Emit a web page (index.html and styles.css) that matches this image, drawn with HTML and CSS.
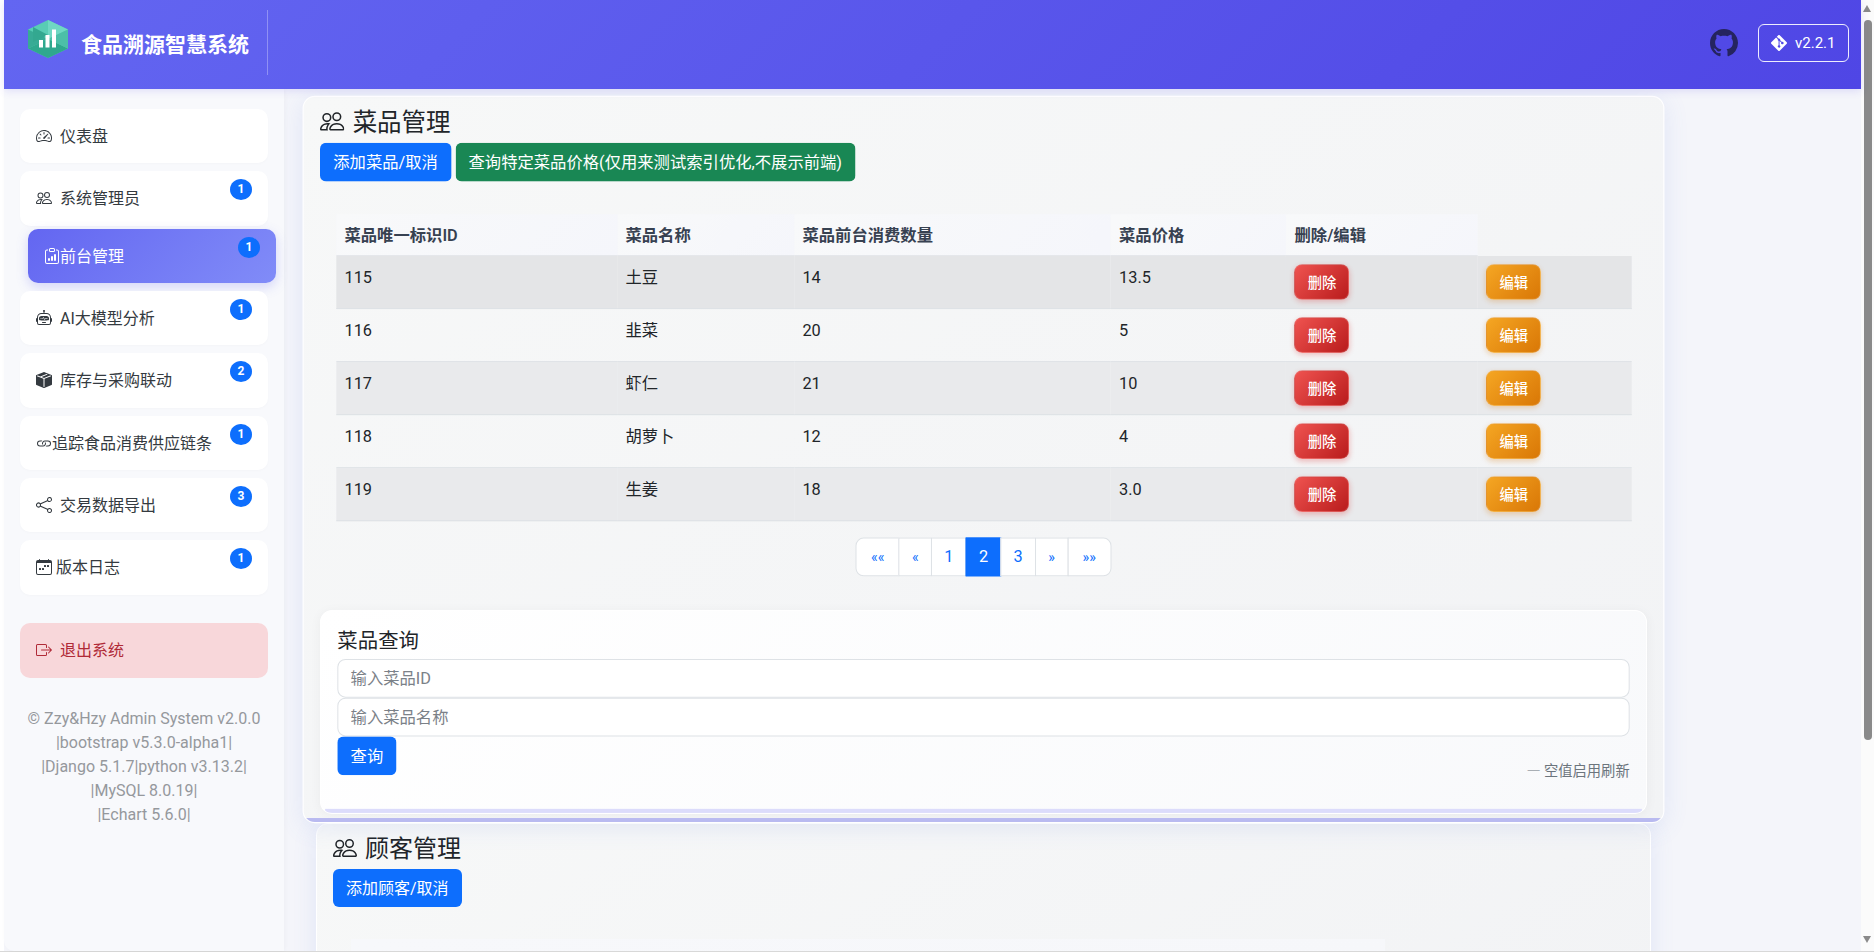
FILE: index.html
```html
<!DOCTYPE html>
<html lang="zh-CN">
<head>
<meta charset="utf-8">
<title>食品溯源智慧系统</title>
<link rel="stylesheet" href="styles.css">
</head>
<body>
<svg class="sprite" xmlns="http://www.w3.org/2000/svg">
  <symbol id="i-speed" viewBox="0 0 16 16"><path d="M8 4a.5.5 0 0 1 .5.5V6a.5.5 0 0 1-1 0V4.5A.5.5 0 0 1 8 4zM3.732 5.732a.5.5 0 0 1 .707 0l.915.914a.5.5 0 1 1-.708.708l-.914-.915a.5.5 0 0 1 0-.707zM2 10a.5.5 0 0 1 .5-.5h1.586a.5.5 0 0 1 0 1H2.5A.5.5 0 0 1 2 10zm9.5 0a.5.5 0 0 1 .5-.5h1.5a.5.5 0 0 1 0 1H12a.5.5 0 0 1-.5-.5zm.754-4.246a.389.389 0 0 0-.527-.02L7.547 9.31a.91.91 0 1 0 1.302 1.258l3.434-4.297a.389.389 0 0 0-.029-.518z"/><path fill-rule="evenodd" d="M0 10a8 8 0 1 1 15.547 2.661c-.442 1.253-1.845 1.602-2.932 1.25C11.309 13.488 9.475 13 8 13c-1.474 0-3.31.488-4.615.911-1.087.352-2.49.003-2.932-1.25A7.988 7.988 0 0 1 0 10zm8-7a7 7 0 0 0-6.603 9.329c.203.575.923.876 1.68.63C4.397 12.533 6.358 12 8 12s3.604.532 4.923.96c.757.245 1.477-.056 1.68-.631A7 7 0 0 0 8 3z"/></symbol>
  <symbol id="i-people" viewBox="0 0 16 16"><path d="M15 14s1 0 1-1-1-4-5-4-5 3-5 4 1 1 1 1h8Zm-7.978-1A.261.261 0 0 1 7 12.996c.001-.264.167-1.03.76-1.72C8.312 10.629 9.282 10 11 10c1.717 0 2.687.63 3.24 1.276.593.69.758 1.457.76 1.72l-.008.002a.274.274 0 0 1-.014.002H7.022ZM11 7a2 2 0 1 0 0-4 2 2 0 0 0 0 4Zm3-2a3 3 0 1 1-6 0 3 3 0 0 1 6 0ZM6.936 9.28a5.88 5.88 0 0 0-1.23-.247A7.35 7.35 0 0 0 5 9c-4 0-5 3-5 4 0 .667.333 1 1 1h4.216A2.238 2.238 0 0 1 5 13c0-1.01.377-2.042 1.09-2.904.243-.294.526-.569.846-.816ZM4.92 10A5.493 5.493 0 0 0 4 13H1c0-.26.164-1.03.76-1.724.545-.636 1.492-1.256 3.16-1.275ZM1.5 5.5a3 3 0 1 1 6 0 3 3 0 0 1-6 0Zm3-2a2 2 0 1 0 0 4 2 2 0 0 0 0-4Z"/></symbol>
  <symbol id="i-clip" viewBox="0 0 16 16"><path d="M4 11a1 1 0 1 1 2 0v1a1 1 0 1 1-2 0v-1zm6-4a1 1 0 1 1 2 0v5a1 1 0 1 1-2 0V7zM7 9a1 1 0 0 1 2 0v3a1 1 0 1 1-2 0V9z"/><path d="M4 1.5H3a2 2 0 0 0-2 2V14a2 2 0 0 0 2 2h10a2 2 0 0 0 2-2V3.5a2 2 0 0 0-2-2h-1v1h1a1 1 0 0 1 1 1V14a1 1 0 0 1-1 1H3a1 1 0 0 1-1-1V3.5a1 1 0 0 1 1-1h1v-1z"/><path d="M9.5 1a.5.5 0 0 1 .5.5v1a.5.5 0 0 1-.5.5h-3a.5.5 0 0 1-.5-.5v-1a.5.5 0 0 1 .5-.5h3zm-3-1A1.5 1.5 0 0 0 5 1.5v1A1.5 1.5 0 0 0 6.5 4h3A1.5 1.5 0 0 0 11 2.5v-1A1.5 1.5 0 0 0 9.5 0h-3z"/></symbol>
  <symbol id="i-robot" viewBox="0 0 16 16"><path d="M6 12.5a.5.5 0 0 1 .5-.5h3a.5.5 0 0 1 0 1h-3a.5.5 0 0 1-.5-.5ZM3 8.062C3 6.76 4.235 5.765 5.53 5.886a26.58 26.58 0 0 0 4.94 0C11.765 5.765 13 6.76 13 8.062v1.157a.933.933 0 0 1-.765.935c-.845.147-2.34.346-4.235.346-1.895 0-3.39-.2-4.235-.346A.933.933 0 0 1 3 9.219V8.062Zm4.542-.827a.25.25 0 0 0-.217.068l-.92.9a24.767 24.767 0 0 1-1.871-.183.25.25 0 0 0-.068.495c.55.076 1.232.149 2.02.193a.25.25 0 0 0 .189-.071l.754-.736.847 1.71a.25.25 0 0 0 .404.062l.932-.97a25.286 25.286 0 0 0 1.922-.188.25.25 0 0 0-.068-.495c-.538.074-1.207.145-1.98.189a.25.25 0 0 0-.166.076l-.754.785-.842-1.7a.25.25 0 0 0-.182-.135Z"/><path d="M8.5 1.866a1 1 0 1 0-1 0V3h-2A4.5 4.5 0 0 0 1 7.5V8a1 1 0 0 0-1 1v2a1 1 0 0 0 1 1v1a2 2 0 0 0 2 2h10a2 2 0 0 0 2-2v-1a1 1 0 0 0 1-1V9a1 1 0 0 0-1-1v-.5A4.5 4.5 0 0 0 10.5 3h-2V1.866ZM14 7.5V13a1 1 0 0 1-1 1H3a1 1 0 0 1-1-1V7.5A3.5 3.5 0 0 1 5.5 4h5A3.5 3.5 0 0 1 14 7.5Z"/></symbol>
  <symbol id="i-box" viewBox="0 0 16 16"><path fill-rule="evenodd" d="M15.528 2.973a.75.75 0 0 1 .472.696v8.662a.75.75 0 0 1-.472.696l-7.25 2.9a.75.75 0 0 1-.557 0l-7.25-2.9A.75.75 0 0 1 0 12.331V3.669a.75.75 0 0 1 .471-.696L7.443.184l.01-.003.268-.108a.75.75 0 0 1 .558 0l.269.108.01.003 6.97 2.789ZM10.404 2 4.25 4.461 1.846 3.5 1 3.839v.4l6.5 2.6v7.922l.5.2.5-.2V6.84l6.5-2.6v-.4l-.846-.339L8 5.961 5.596 5l6.154-2.461L10.404 2Z"/></symbol>
  <symbol id="i-link" viewBox="0 0 16 16"><path d="M6.354 5.5H4a3 3 0 0 0 0 6h3a3 3 0 0 0 2.83-4H9c-.086 0-.17.01-.25.031A2 2 0 0 1 7 10.5H4a2 2 0 1 1 0-4h1.535c.218-.376.495-.714.82-1z"/><path d="M9 5.5a3 3 0 0 0-2.83 4h1.098A2 2 0 0 1 9 6.5h3a2 2 0 1 1 0 4h-1.535a4.02 4.02 0 0 1-.82 1H12a3 3 0 1 0 0-6H9z"/></symbol>
  <symbol id="i-share" viewBox="0 0 16 16"><path d="M13.5 1a1.5 1.5 0 1 0 0 3 1.5 1.5 0 0 0 0-3zM11 2.5a2.5 2.5 0 1 1 .603 1.628l-6.718 3.12a2.499 2.499 0 0 1 0 1.504l6.718 3.12a2.5 2.5 0 1 1-.488.876l-6.718-3.12a2.5 2.5 0 1 1 0-3.256l6.718-3.12A2.5 2.5 0 0 1 11 2.5zm-8.5 4a1.5 1.5 0 1 0 0 3 1.5 1.5 0 0 0 0-3zm11 5.5a1.5 1.5 0 1 0 0 3 1.5 1.5 0 0 0 0-3z"/></symbol>
  <symbol id="i-cal" viewBox="0 0 16 16"><path d="M11 6.5a.5.5 0 0 1 .5-.5h1a.5.5 0 0 1 .5.5v1a.5.5 0 0 1-.5.5h-1a.5.5 0 0 1-.5-.5v-1zm-3 0a.5.5 0 0 1 .5-.5h1a.5.5 0 0 1 .5.5v1a.5.5 0 0 1-.5.5h-1a.5.5 0 0 1-.5-.5v-1zm-5 3a.5.5 0 0 1 .5-.5h1a.5.5 0 0 1 .5.5v1a.5.5 0 0 1-.5.5h-1a.5.5 0 0 1-.5-.5v-1zm3 0a.5.5 0 0 1 .5-.5h1a.5.5 0 0 1 .5.5v1a.5.5 0 0 1-.5.5h-1a.5.5 0 0 1-.5-.5v-1z"/><path d="M3.5 0a.5.5 0 0 1 .5.5V1h8V.5a.5.5 0 0 1 1 0V1h1a2 2 0 0 1 2 2v11a2 2 0 0 1-2 2H2a2 2 0 0 1-2-2V3a2 2 0 0 1 2-2h1V.5a.5.5 0 0 1 .5-.5zM1 4v10a1 1 0 0 0 1 1h12a1 1 0 0 0 1-1V4H1z"/></symbol>
  <symbol id="i-exit" viewBox="0 0 16 16"><path fill-rule="evenodd" d="M10 12.5a.5.5 0 0 1-.5.5h-8a.5.5 0 0 1-.5-.5v-9a.5.5 0 0 1 .5-.5h8a.5.5 0 0 1 .5.5v2a.5.5 0 0 0 1 0v-2A1.5 1.5 0 0 0 9.5 2h-8A1.5 1.5 0 0 0 0 3.5v9A1.5 1.5 0 0 0 1.5 14h8a1.5 1.5 0 0 0 1.5-1.5v-2a.5.5 0 0 0-1 0v2z"/><path fill-rule="evenodd" d="M15.854 8.354a.5.5 0 0 0 0-.708l-3-3a.5.5 0 0 0-.708.708L14.293 7.5H5.5a.5.5 0 0 0 0 1h8.793l-2.147 2.146a.5.5 0 0 0 .708.708l3-3z"/></symbol>
</svg>
<div class="window">
  <div class="page">
    <header class="topbar">
      <div class="brand">
        <svg class="logo" viewBox="0 0 40 38" xmlns="http://www.w3.org/2000/svg">
          <polygon points="20,0 40,9.5 40,28.5 20,38 0,28.5 0,9.5" fill="#58cdb4"/>
          <polygon points="20,0 40,9.5 20,19" fill="#6fd8c3"/>
          <polygon points="0,9.5 20,19 0,28.5" fill="#37ab95"/>
          <polygon points="20,19 40,28.5 20,38 0,28.5" fill="#2fa88e"/>
          <polygon points="20,19 40,9.5 40,28.5" fill="#4cbfa8"/>
          <polygon points="5,7 20,15 5,22" fill="#33a890"/>
          <rect x="11" y="20" width="4" height="7.5" fill="#fff"/>
          <rect x="17.5" y="15" width="4" height="12.5" fill="#fff"/>
          <rect x="24" y="9.5" width="4" height="18" fill="#fff"/>
        </svg>
        <span class="brand-name">食品溯源智慧系统</span>
      </div>
      <div class="topbar-tools">
        <svg class="gh" viewBox="0 0 16 16" xmlns="http://www.w3.org/2000/svg"><path d="M8 0C3.58 0 0 3.58 0 8c0 3.54 2.29 6.53 5.47 7.59.4.07.55-.17.55-.38 0-.19-.01-.82-.01-1.49-2.01.37-2.53-.49-2.69-.94-.09-.23-.48-.94-.82-1.13-.28-.15-.68-.52-.01-.53.63-.01 1.08.58 1.23.82.72 1.21 1.87.87 2.33.66.07-.52.28-.87.51-1.07-1.78-.2-3.64-.89-3.64-3.95 0-.87.31-1.59.82-2.15-.08-.2-.36-1.02.08-2.12 0 0 .67-.21 2.2.82.64-.18 1.32-.27 2-.27.68 0 1.36.09 2 .27 1.53-1.04 2.2-.82 2.2-.82.44 1.1.16 1.92.08 2.12.51.56.82 1.27.82 2.15 0 3.07-1.87 3.75-3.65 3.95.29.25.54.73.54 1.48 0 1.07-.01 1.93-.01 2.2 0 .21.15.46.55.38A8.012 8.012 0 0 0 16 8c0-4.42-3.58-8-8-8z"/></svg>
        <a class="version">
          <svg class="git" viewBox="0 0 16 16" xmlns="http://www.w3.org/2000/svg"><path d="M15.698 7.287 8.712.302a1.03 1.03 0 0 0-1.457 0l-1.45 1.45 1.84 1.84a1.223 1.223 0 0 1 1.55 1.56l1.773 1.774a1.224 1.224 0 1 1-.733.68L8.58 5.95v4.35a1.224 1.224 0 1 1-1.008-.036V5.872a1.224 1.224 0 0 1-.665-1.608L5.093 2.45l-4.79 4.79a1.03 1.03 0 0 0 0 1.457l6.986 6.986a1.03 1.03 0 0 0 1.457 0l6.953-6.953a1.031 1.031 0 0 0 0-1.457"/></svg>
          v2.2.1
        </a>
      </div>
    </header>
    <div class="workspace">
      <aside class="sidebar">
        <nav class="menu">
          <a class="menu-item"><svg class="ico"><use href="#i-speed"/></svg><span>仪表盘</span></a>
          <a class="menu-item"><svg class="ico"><use href="#i-people"/></svg><span>系统管理员</span><b class="badge">1</b></a>
          <a class="menu-item active gap-none"><svg class="ico"><use href="#i-clip"/></svg><span>前台管理</span><b class="badge">1</b></a>
          <a class="menu-item"><svg class="ico"><use href="#i-robot"/></svg><span>AI大模型分析</span><b class="badge">1</b></a>
          <a class="menu-item"><svg class="ico"><use href="#i-box"/></svg><span>库存与采购联动</span><b class="badge">2</b></a>
          <a class="menu-item gap-none"><svg class="ico"><use href="#i-link"/></svg><span>追踪食品消费供应链条</span><b class="badge">1</b></a>
          <a class="menu-item"><svg class="ico"><use href="#i-share"/></svg><span>交易数据导出</span><b class="badge">3</b></a>
          <a class="menu-item gap-small"><svg class="ico"><use href="#i-cal"/></svg><span>版本日志</span><b class="badge">1</b></a>
        </nav>
        <a class="logout"><svg class="ico"><use href="#i-exit"/></svg><span>退出系统</span></a>
        <p class="credits">© Zzy&amp;Hzy Admin System v2.0.0<br>|bootstrap v5.3.0-alpha1|<br>|Django 5.1.7|python v3.13.2|<br>|MySQL 8.0.19|<br>|Echart 5.6.0|</p>
      </aside>
      <main class="content">
        <section class="card card-hover">
          <h4 class="card-title"><svg class="title-ico"><use href="#i-people"/></svg><span class="title-text">菜品管理</span></h4>
          <div class="actions">
            <button class="btn btn-blue">添加菜品/取消</button>
            <button class="btn btn-green">查询特定菜品价格(仅用来测试索引优化,不展示前端)</button>
          </div>
          <table class="data">
            <colgroup><col class="c1"><col class="c2"><col class="c3"><col class="c4"><col class="c5"><col class="c6"></colgroup>
            <thead><tr><th>菜品唯一标识ID</th><th>菜品名称</th><th>菜品前台消费数量</th><th>菜品价格</th><th>删除/编辑</th></tr></thead>
            <tbody>
              <tr class="row-hover"><td>115</td><td>土豆</td><td>14</td><td>13.5</td><td><button class="mini mini-red">删除</button></td><td><button class="mini mini-orange">编辑</button></td></tr>
              <tr><td>116</td><td>韭菜</td><td>20</td><td>5</td><td><button class="mini mini-red">删除</button></td><td><button class="mini mini-orange">编辑</button></td></tr>
              <tr class="row-odd"><td>117</td><td>虾仁</td><td>21</td><td>10</td><td><button class="mini mini-red">删除</button></td><td><button class="mini mini-orange">编辑</button></td></tr>
              <tr><td>118</td><td>胡萝卜</td><td>12</td><td>4</td><td><button class="mini mini-red">删除</button></td><td><button class="mini mini-orange">编辑</button></td></tr>
              <tr class="row-odd"><td>119</td><td>生姜</td><td>18</td><td>3.0</td><td><button class="mini mini-red">删除</button></td><td><button class="mini mini-orange">编辑</button></td></tr>
            </tbody>
          </table>
          <nav class="pager">
            <a class="pg pg-small">««</a><a class="pg pg-small">«</a><a class="pg">1</a><a class="pg pg-on">2</a><a class="pg">3</a><a class="pg pg-small">»</a><a class="pg pg-small">»»</a>
          </nav>
          <div class="query">
            <h5 class="query-title">菜品查询</h5>
            <input class="field" placeholder="输入菜品ID">
            <input class="field" placeholder="输入菜品名称">
            <div class="query-foot">
              <button class="btn btn-blue">查询</button>
              <span class="hint">— 空值启用刷新</span>
            </div>
          </div>
        </section>
        <section class="card card-next">
          <h4 class="card-title"><svg class="title-ico"><use href="#i-people"/></svg><span class="title-text">顾客管理</span></h4>
          <div class="actions"><button class="btn btn-blue">添加顾客/取消</button></div>
          <div class="next-head"></div>
        </section>
      </main>
    </div>
  </div>
  <div class="scrollbar">
    <span class="arrow-up"></span>
    <span class="thumb"></span>
    <span class="arrow-down"></span>
  </div>
</div>
</body>
</html>
```

FILE: styles.css
```css
* { box-sizing: border-box; }
html, body { margin: 0; height: 952px; overflow: hidden; background: #fff; }
body { font-family: Roboto, "Noto Sans CJK SC", sans-serif; font-size: 16px; line-height: 24px; color: #212529; }
.sprite { display: none; }

.window { display: flex; height: 952px; padding-left: 4px; border-bottom: 1px solid #d8d8d8; }
.page { flex: 1; min-width: 0; display: flex; flex-direction: column; }

/* top bar */
.topbar { flex: none; height: 89px; display: flex; align-items: center; justify-content: space-between; background: linear-gradient(135deg, #6366f1, #4f46e5); box-shadow: 0 2px 8px rgba(79, 70, 229, .15); position: relative; z-index: 3; }
.brand { display: flex; align-items: center; height: 65px; width: 240px; margin-left: 24px; margin-top: -4px; border-right: 1px solid rgba(255, 255, 255, .3); }
.logo { width: 40px; height: 38px; margin-top: -8px; flex: none; }
.brand-name { margin-left: 13px; color: #fff; font-weight: 700; font-size: 21px; line-height: 28px; margin-top: 4px; white-space: nowrap; }
.topbar-tools { display: flex; align-items: center; gap: 20px; margin-right: 12px; margin-top: -3px; }
.gh { width: 28px; height: 28px; fill: #25245f; }
.version { display: flex; align-items: center; gap: 8px; width: 91px; height: 38px; padding-left: 12px; border: 1px solid rgba(255, 255, 255, .9); border-radius: 6px; color: #fff; font-size: 15px; }
.git { width: 16px; height: 16px; fill: #fff; }

.workspace { flex: 1; min-height: 0; display: flex; background: #f4f5fa; }

/* sidebar */
.sidebar { flex: none; width: 280px; padding: 20px 16px 0; background: #f8f9fc; border-bottom-left-radius: 10px; box-shadow: 1px 0 4px rgba(0, 0, 0, .03); position: relative; z-index: 2; }
.menu { display: flex; flex-direction: column; gap: 8px; }
.menu-item { position: relative; display: flex; align-items: center; gap: 8px; height: 54.33px; padding: 0 16px; border-radius: 10px; background: #fff; color: #343a40; box-shadow: 0 1px 3px rgba(0, 0, 0, .02); white-space: nowrap; }
.menu-item span, .logout span { padding-top: 2px; }
.menu-item.gap-none { gap: 0; }
.menu-item.gap-small { gap: 4px; }
.menu-item.active { margin: -5px -8px 0 8px; background: linear-gradient(135deg, #6366f1, #818cf8); color: #fff; box-shadow: 0 4px 12px rgba(99, 102, 241, .25); }
.ico { width: 16px; height: 16px; flex: none; fill: currentColor; }
.badge { position: absolute; top: 8px; right: 16px; width: 22px; height: 21px; border-radius: 50%; background: #0d6efd; color: #fff; font-size: 12px; line-height: 21px; text-align: center; }
.logout { display: flex; align-items: center; gap: 8px; height: 55px; margin-top: 28px; padding: 0 16px; border-radius: 10px; background: #f8d7da; color: #b02a37; }
.credits { margin: 29px 0 0; text-align: center; font-size: 16px; line-height: 24px; color: #95989c; white-space: nowrap; }

/* main */
.content { flex: 1; min-width: 0; padding: 19px 210px 0 32px; overflow: hidden; }
.card { position: relative; border: 1px solid #fff; border-radius: 12px; background: linear-gradient(145deg, #f7f8f8, #f2f3f5); box-shadow: 0 4px 24px rgba(90, 120, 220, .12); padding: 9px 16px 0; overflow: hidden; }
.card-hover { height: 713px; margin-bottom: 2px; transform: translateY(-5px) scale(1.02); z-index: 1; }
.card-hover::after { content: ""; position: absolute; left: 2px; right: 2px; bottom: 0; height: 4px; background: #b9baf0; }
.card-next { height: 200px; }
.card-title { display: flex; align-items: center; height: 29px; margin: 0 0 7px; font-size: 24px; line-height: 29px; font-weight: 400; }
.title-text { padding-top: 4px; }
.title-ico { width: 24px; height: 24px; margin-right: 8px; fill: currentColor; }
.actions { display: flex; gap: 4px; }
.btn { height: 38px; padding: 2px 12px 0; border: 1px solid transparent; border-radius: 6px; color: #fff; font: inherit; white-space: nowrap; }
.btn-blue { background: #0d6efd; }
.btn-green { background: #198754; }

/* table */
.data { width: 1270px; margin: 32px 0 0 16px; border-collapse: collapse; table-layout: fixed; }
.c1 { width: 275.5px; } .c2 { width: 173.5px; } .c3 { width: 310.4px; } .c4 { width: 172px; } .c5 { width: 188px; } .c6 { width: 150.6px; }
.data th { height: 40px; padding: 9px 8px 7px; text-align: left; font-weight: 600; color: #374151; background: linear-gradient(135deg, #f8f9fa, #f5f6fb); border-bottom: 1px solid #e5e7eb; }
.data td { height: 52px; padding: 8px; line-height: 26px; vertical-align: top; border-bottom: 1px solid #dee2e6; }
.row-hover td { background: #e4e5e7; }
.row-odd td { background: #e9eaec; }
.mini { display: block; width: 54px; height: 35px; padding: 1px 0 0; border: 1px solid rgba(255, 255, 255, .15); border-radius: 8px; color: #fff; font: inherit; font-size: 14px; font-weight: 500; }
.mini-red { background: linear-gradient(135deg, #ef5350, #b91c1c); box-shadow: 0 2px 5px rgba(220, 38, 38, .25); }
.mini-orange { background: linear-gradient(135deg, #f5a623, #d97706); box-shadow: 0 2px 5px rgba(217, 119, 6, .25); }

/* pagination */
.pager { display: flex; justify-content: center; margin-top: 16px; }
.pg { display: flex; align-items: center; justify-content: center; height: 38px; padding: 0 12px; margin-left: -1px; border: 1px solid #dee2e6; background: #fff; color: #0d6efd; }
.pg:first-child { border-radius: 8px 0 0 8px; margin-left: 0; padding: 0 14px; }
.pg:last-child { border-radius: 0 8px 8px 0; padding: 0 14px; }
.pg-small { font-size: 14px; }
.pg-on { background: #0d6efd; border-color: #0d6efd; color: #fff; }

/* query card */
.query { position: relative; height: 200px; margin-top: 33px; padding: 16px; border: 1px solid #fff; border-radius: 12px; background: linear-gradient(135deg, #ffffff, #f8f9fb); box-shadow: 0 2px 10px rgba(0, 0, 0, .04); overflow: hidden; }
.query::after { content: ""; position: absolute; left: 4px; right: 4px; bottom: 0; height: 4px; background: #dcdcfb; }
.query-title { margin: 1px 0 6px; font-size: 20px; line-height: 24px; font-weight: 400; }
.field { display: block; width: 100%; height: 38px; padding: 0 12px; border: 1px solid #dee2e6; border-radius: 8px; background: #fff; font: inherit; color: #212529; }
.field::placeholder { color: #7b8188; opacity: 1; }
.query-foot { display: flex; justify-content: space-between; align-items: flex-end; }
.hint { margin-bottom: -6px; font-family: "Noto Sans CJK SC", sans-serif; font-size: 14px; line-height: 21px; color: #6c757d; }

.next-head { width: 1034px; height: 40px; margin: 32px 0 0 18px; background: linear-gradient(135deg, #f7f8fb, #f6f7fa); }

/* scrollbar */
.scrollbar { position: relative; flex: none; width: 13px; background: #fbfbfb; }
.thumb { position: absolute; left: 3px; top: 20px; width: 8px; height: 720px; border-radius: 4px; background: #8a8a8a; }
.arrow-up, .arrow-down { position: absolute; left: 2px; width: 0; height: 0; border-left: 4.5px solid transparent; border-right: 4.5px solid transparent; }
.arrow-up { top: 5px; border-bottom: 7px solid #8a8a8a; }
.arrow-down { top: 936px; border-top: 7px solid #8a8a8a; }
```
